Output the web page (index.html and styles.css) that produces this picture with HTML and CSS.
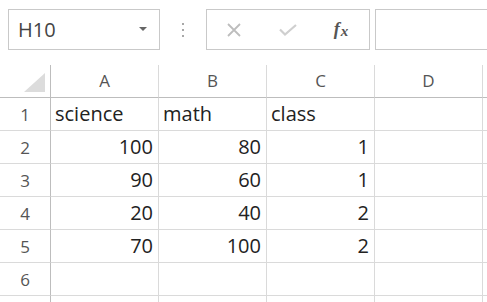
FILE: index.html
```html
<!DOCTYPE html>
<html lang="en">
<head>
    <meta charset="UTF-8">
    <title>Sheet</title>
    <link rel="stylesheet" href="styles.css">
</head>
<body>
    <div class="formula-bar">
        <div class="name-box">
            <span>H10</span>
            <span class="arrow"></span>
        </div>
        <div class="grip">
            <span></span><span></span><span></span>
        </div>
        <div class="actions">
            <span class="slot">
                <svg width="14" height="14" viewBox="0 0 14 14"><path d="M1 1 L13 13 M13 1 L1 13" stroke="#bdbdbd" stroke-width="1.8" fill="none"/></svg>
            </span>
            <span class="slot">
                <svg width="18" height="12" viewBox="0 0 18 12"><path d="M1 5.5 L6 10.5 L17 1" stroke="#cfcfcf" stroke-width="2.2" fill="none"/></svg>
            </span>
            <span class="slot fx"><i>f</i><i class="x">x</i></span>
        </div>
        <div class="input"></div>
    </div>

    <div class="grid">
        <div class="corner">
            <svg width="22" height="20" viewBox="0 0 22 20"><polygon points="21,0 21,19 0,19" fill="#dcdcdc"/></svg>
        </div>
        <div class="col-head">A</div>
        <div class="col-head">B</div>
        <div class="col-head">C</div>
        <div class="col-head">D</div>
        <div class="col-head"></div>

        <div class="row-head">1</div>
        <div class="cell">science</div>
        <div class="cell">math</div>
        <div class="cell">class</div>
        <div class="cell"></div>
        <div class="cell"></div>

        <div class="row-head">2</div>
        <div class="cell num">100</div>
        <div class="cell num">80</div>
        <div class="cell num">1</div>
        <div class="cell"></div>
        <div class="cell"></div>

        <div class="row-head">3</div>
        <div class="cell num">90</div>
        <div class="cell num">60</div>
        <div class="cell num">1</div>
        <div class="cell"></div>
        <div class="cell"></div>

        <div class="row-head">4</div>
        <div class="cell num">20</div>
        <div class="cell num">40</div>
        <div class="cell num">2</div>
        <div class="cell"></div>
        <div class="cell"></div>

        <div class="row-head">5</div>
        <div class="cell num">70</div>
        <div class="cell num">100</div>
        <div class="cell num">2</div>
        <div class="cell"></div>
        <div class="cell"></div>

        <div class="row-head">6</div>
        <div class="cell"></div>
        <div class="cell"></div>
        <div class="cell"></div>
        <div class="cell"></div>
        <div class="cell"></div>

        <div class="row-head"></div>
        <div class="cell"></div>
        <div class="cell"></div>
        <div class="cell"></div>
        <div class="cell"></div>
        <div class="cell"></div>
    </div>
</body>
</html>
```

FILE: styles.css
```css
body {
    margin: 0;
    background-color: #fff;
    font-family: "Open Sans", Arial, sans-serif;
    overflow: hidden;
}
.formula-bar {
    display: flex;
    height: 41px;
    margin-top: 9px;
    margin-bottom: 15px;
    padding-left: 8px;
}
.name-box {
    width: 152px;
    box-sizing: border-box;
    border: 1px solid #c9c9c9;
    display: flex;
    align-items: center;
    justify-content: space-between;
    padding: 0 12px 0 9px;
    font-size: 20px;
    color: #444;
}
.arrow {
    width: 0;
    height: 0;
    border-left: 4px solid transparent;
    border-right: 4px solid transparent;
    border-top: 4px solid #666;
    margin-top: -2px;
}
.grip {
    width: 46px;
    display: flex;
    flex-direction: column;
    align-items: center;
    justify-content: center;
    gap: 4px;
}
.grip span {
    width: 2px;
    height: 2px;
    background-color: #a8a8a8;
}
.actions {
    width: 164px;
    box-sizing: border-box;
    border: 1px solid #c9c9c9;
    display: flex;
    align-items: center;
    gap: 14px;
    padding-left: 7px;
}
.slot {
    width: 40px;
    display: flex;
    justify-content: center;
    align-items: center;
}
.slot:last-child {
    margin-left: -1px;
}
.fx {
    font-family: "Liberation Serif", serif;
    font-weight: bold;
    color: #555;
    font-size: 18px;
}
.fx .x {
    font-size: 15px;
    margin-left: 1px;
    margin-top: 4px;
}
.input {
    flex: 1;
    margin-left: 5px;
    margin-right: -10px;
    border: 1px solid #c9c9c9;
}
.grid {
    display: grid;
    grid-template-columns: 51px 108px 108px 108px 108px 1fr;
    grid-auto-rows: 33px;
}
.grid > div {
    box-sizing: border-box;
    border-right: 1px solid #dadada;
    border-bottom: 1px solid #dadada;
}
.corner {
    display: flex;
    align-items: flex-end;
    justify-content: flex-end;
    padding: 0 4px 4px 0;
}
.grid > .corner,
.grid > .col-head {
    border-bottom-color: #bdbdbd;
}
.grid > .corner,
.grid > .row-head {
    border-right-color: #bdbdbd;
}
.col-head,
.row-head {
    display: flex;
    align-items: center;
    justify-content: center;
    font-size: 17px;
    color: #555;
}
.col-head {
    padding-bottom: 2px;
}
.cell {
    font-size: 20px;
    line-height: 32px;
    color: #222;
    padding: 0 5px 0 4px;
}
.num {
    text-align: right;
}
```
